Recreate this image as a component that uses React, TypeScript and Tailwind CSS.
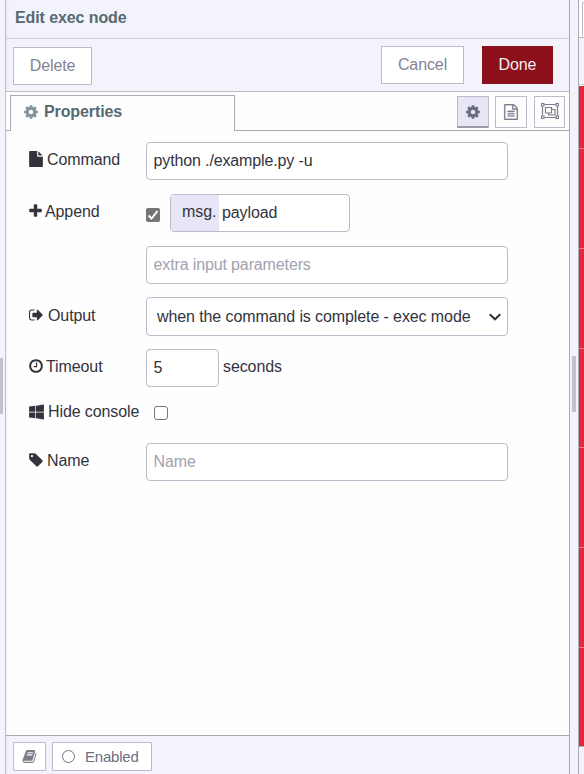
import React from "react";

const COG =
  "M1152 896q0-106-75-181t-181-75-181 75-75 181 75 181 181 75 181-75 75-181zm512-109v222q0 12-8 23t-20 13l-185 28q-19 54-39 91 35 50 107 138 10 12 10 25t-9 23q-27 37-99 108t-94 71q-12 0-26-9l-138-108q-44 23-91 38-16 136-29 186-7 28-36 28h-222q-14 0-24.5-8.5t-11.5-21.5l-28-184q-49-16-90-37l-141 107q-10 9-25 9-14 0-25-11-126-114-165-168-7-10-7-23 0-12 8-23 15-21 51-66.5t54-70.5q-27-50-41-99l-183-27q-13-2-21-12.5t-8-23.5v-222q0-12 8-23t19-13l186-28q14-46 39-92-40-57-107-138-10-12-10-24 0-10 9-23 26-36 98.5-107.5t94.5-71.5q13 0 26 10l138 107q44-23 91-38 16-136 29-186 7-28 36-28h222q14 0 24.5 8.5t11.5 21.5l28 184q49 16 90 37l142-107q9-9 24-9 13 0 25 10 129 119 165 170 7 8 7 22 0 12-8 23-15 21-51 66.5t-54 70.5q26 50 41 98l183 28q13 2 21 12.5t8 23.5z";
const FILE =
  "M1152 512v-472q22 14 36 28l408 408q14 14 28 36h-472zm-128 32q0 40 28 68t68 28h544v1056q0 40-28 68t-68 28h-1344q-40 0-68-28t-28-68v-1600q0-40 28-68t68-28h800v544z";
const FILE_TEXT =
  "M1596 380q28 28 48 76t20 88v1152q0 40-28 68t-68 28h-1344q-40 0-68-28t-28-68v-1600q0-40 28-68t68-28h896q40 0 88 20t76 48zm-444-244v376h376q-10-29-22-41l-313-313q-12-12-41-22zm384 1528v-1024h-416q-40 0-68-28t-28-68v-416h-768v1536h1280zm-1024-864q0-14 9-23t23-9h704q14 0 23 9t9 23v64q0 14-9 23t-23 9h-704q-14 0-23-9t-9-23v-64zm736 224q14 0 23 9t9 23v64q0 14-9 23t-23 9h-704q-14 0-23-9t-9-23v-64q0-14 9-23t23-9h704zm0 256q14 0 23 9t9 23v64q0 14-9 23t-23 9h-704q-14 0-23-9t-9-23v-64q0-14 9-23t23-9h704z";
const PLUS =
  "M1600 736v192q0 40-28 68t-68 28h-416v416q0 40-28 68t-68 28h-192q-40 0-68-28t-28-68v-416h-416q-40 0-68-28t-28-68v-192q0-40 28-68t68-28h416v-416q0-40 28-68t68-28h192q40 0 68 28t28 68v416h416q40 0 68 28t28 68z";
const CLOCK =
  "M1024 544v448q0 14-9 23t-23 9h-320q-14 0-23-9t-9-23v-64q0-14 9-23t23-9h224v-352q0-14 9-23t23-9h64q14 0 23 9t9 23zm416 352q0-148-73-273t-198-198-273-73-273 73-198 198-73 273 73 273 198 198 273 73 273-73 198-198 73-273zm224 0q0 209-103 385.500t-279.500 279.500-385.500 103-385.500-103-279.500-279.500-103-385.500 103-385.500 279.500-279.500 385.500-103 385.500 103 279.500 279.500 103 385.500z";
const WINDOWS =
  "M682 1006v651l-682-94v-557zM682 263v659h-682v-565zM1664 1006v786l-907-125v-661zM1664 128v794h-907v-669z";
const TAG =
  "M576 448q0-53-37.500-90.500t-90.500-37.500-90.500 37.500-37.500 90.500 37.500 90.500 90.500 37.500 90.500-37.500 37.500-90.500zm1067 576q0 53-37 90l-491 492q-39 37-91 37-53 0-90-37l-715-716q-38-37-64.500-101t-26.500-117v-416q0-52 38-90t90-38h416q53 0 117 26.500t102 64.500l715 714q37 39 37 91z";
const SIGN_OUT =
  "M704 1440q0 4 1 20t.5 26.500-3 23.500-10 19.500-20.500 6.500h-320q-119 0-203.500-84.500t-84.500-203.500v-704q0-119 84.500-203.500t203.500-84.500h320q13 0 22.500 9.500t9.500 22.500q0 4 1 20t.5 26.500-3 23.500-10 19.500-20.500 6.500h-320q-66 0-113 47t-47 113v704q0 66 47 113t113 47h312l11.500 1 11.500 3 8 5.500 7 9 2 13.500zm928-544q0 26-19 45l-544 544q-19 19-45 19t-45-19-19-45v-288h-448q-26 0-45-19t-19-45v-384q0-26 19-45t45-19h448v-288q0-26 19-45t45-19 45 19l544 544q19 19 19 45z";
const BOOK =
  "M1703 478q40 57 18 129l-275 906q-19 64-76.500 107.500t-122.500 43.500h-923q-77 0-148.500-53.500t-99.500-131.500q-24-67-2-127 0-4 3-27t4-37q1-8-3-21.500t-3-19.500q2-11 8-21t16.500-23.500 16.500-23.500q23-38 45-91.500t30-91.500q3-10 .5-30t-.5-28q3-11 17-28t17-23q21-36 42-92t25-90q1-9-2.500-32t.5-28q4-13 22-30.500t22-22.500q19-26 42.500-84.500t27.500-96.500q1-8-3-25.500t-2-26.500q2-8 9-18t18-23 17-21q8-12 16.500-30.500t15-35 16-36 19.500-32 26.500-23.500 36-11.500 47.500 5.500l-1 3q38-9 51-9h761q74 0 114 56t18 130l-274 906q-36 119-71.500 153.500t-128.500 34.500h-869q-27 0-38 15-11 16-1 43 24 70 144 70h923q29 0 56-15.500t35-41.500l300-987q7-22 5-57 38 15 59 43zm-1064 2q-4 13 2 22.500t20 9.500h608q13 0 25.500-9.500t16.500-22.500l21-64q4-13-2-22.500t-20-9.500h-608q-13 0-25.500 9.500t-16.500 22.500zm-83 256q-4 13 2 22.500t20 9.500h608q13 0 25.500-9.500t16.500-22.500l21-64q4-13-2-22.500t-20-9.500h-608q-13 0-25.500 9.500t-16.500 22.500z";

type IconProps = { d: string; box?: string; className: string };

function Icon({ d, box = "0 0 1792 1792", className }: IconProps) {
  return (
    <svg viewBox={box} fill="currentColor" className={`shrink-0 ${className}`}>
      <path d={d} />
    </svg>
  );
}

function GroupIcon() {
  return (
    <svg viewBox="0 0 18 16" fill="none" stroke="currentColor" strokeWidth="1.2" className="h-4 w-[18px] shrink-0">
      <path d="M3.500 1.500h11M3.500 14.500h11M1.500 3.500v9M16.500 3.500v9" />
      <path d="M.5.5h2.500v2.500H.5zM15 .5h2.500v2.500H15zM.5 13H3v2.500H.5zM15 13h2.500v2.500H15z" />
      <path d="M4.500 4.500h6v5.500h-6zM10.500 6.500h3.500v5.500H7.500v-2" />
    </svg>
  );
}

function Label({ icon, children, className }: { icon: React.ReactNode; children: React.ReactNode; className: string }) {
  return (
    <div className={`flex h-6 w-[117px] shrink-0 items-center whitespace-nowrap ${className}`}>
      {icon}
      {children}
    </div>
  );
}

const field = "flex h-[38px] items-center rounded-[4px] border border-[#bbbbca] bg-white px-[6.5px] tracking-[-0.13px]";

export default function App() {
  return (
    <div className="flex h-[774px] w-[584px] overflow-hidden bg-[#f3f3fc] font-['Liberation_Sans',Arial,sans-serif] text-base leading-6 tracking-[-0.1px] text-[#33333d]">
      <div className="flex w-[6px] shrink-0 items-start border-r border-[#bbbbca]">
        <div className="mt-[358px] h-14 w-[3px] bg-[#c2c2cc]" />
      </div>

      <main className="flex w-[563px] shrink-0 flex-col shadow-[inset_3px_0_3px_-2px_#e8e8f1]">
        <header className="flex h-[39px] items-start border-b border-[#cfcfdc] pt-[6px] pl-[9px] font-bold text-[#566a71]">
          Edit exec node
        </header>

        <div className="flex h-[53px] items-start border-b border-[#bbbbca] pl-[7px]">
          <button className="mt-2 h-[38px] w-[79px] border border-[#bbbbca] bg-white pb-px text-[#838391]">Delete</button>
          <button className="mt-[7px] ml-[289px] h-[38px] w-[83px] border border-[#bbbbca] bg-white pb-px text-[#838391]">
            Cancel
          </button>
          <button className="mt-[7px] ml-[18px] h-[38px] w-[71px] bg-[#8c101c] pb-px text-[#eeeeee]">Done</button>
        </div>

        <div className="flex h-[39px] bg-[#fefefe]">
          <div className="w-1 border-b border-[#aaaab7]" />
          <div className="mt-[3px] flex w-[225px] items-center border-x border-t border-[#aaaab7] pb-[3px] pl-3 font-bold text-[#566a71]">
            <Icon d={COG} className="mr-[5px] h-4 w-4 text-[#849398]" />
            Properties
          </div>
          <div className="flex flex-1 items-start border-b border-[#aaaab7] pt-1 pl-[222px] text-[#7c7c8c]">
            <div className="flex h-8 w-8 items-center justify-center border border-b-2 border-[#bbbbca] border-b-[#9a9aa9] bg-[#e6e6f7]">
              <Icon d={COG} className="h-4 w-4 text-[#656d83]" />
            </div>
            <div className="ml-[6px] flex h-8 w-8 items-center justify-center border border-[#bbbbca]">
              <Icon d={FILE_TEXT} className="mb-px h-4 w-4 stroke-current [stroke-width:30]" />
            </div>
            <div className="ml-[7px] flex h-8 w-[31px] items-center justify-center border border-[#bbbbca] pb-[2px]">
              <GroupIcon />
            </div>
          </div>
        </div>

        <section className="h-[604px] bg-[#fefefe] pt-[11px] pl-[23px] shadow-[inset_3px_0_3px_-2px_#f0f0f4]">
          <div className="flex h-[38px]">
            <Label className="mt-[6px]" icon={<Icon d={FILE} box="128 0 1536 1792" className="mr-1 mb-[2px] h-4 w-[14px]" />}>
              Command
            </Label>
            <div className={`${field} w-[362px]`}>python ./example.py -u</div>
          </div>

          <div className="mt-[14px] flex h-[38px]">
            <Label className="mt-[6px]" icon={<Icon d={PLUS} box="192 0 1408 1792" className="mr-[3px] mb-[2px] h-4 w-[13px]" />}>
              Append
            </Label>
            <span className="mt-[14px] flex h-[14px] w-[14px] items-center justify-center rounded-[2px] bg-[#757575]">
              <svg viewBox="0 0 14 14" fill="none" stroke="white" strokeWidth="2" className="h-[14px] w-[14px]">
                <path d="M2.500 7.500l3 3L11.500 3" />
              </svg>
            </span>
            <div className="ml-[10px] flex h-[38px] w-[180px] items-center overflow-hidden rounded-[4px] border border-[#bbbbca] bg-white">
              <span className="flex h-full w-[48px] items-center bg-[#e6e6f7] pb-[2px] pl-[11px]">msg.</span>
              <span className="pl-[3px]">payload</span>
            </div>
          </div>

          <div className="mt-[14px] pl-[117px]">
            <div className={`${field} w-[362px] text-[#a2a2b0]`}>extra input parameters</div>
          </div>

          <div className="mt-[13px] flex h-[39px]">
            <Label className="mt-[7px]" icon={<Icon d={SIGN_OUT} box="64 0 1600 1792" className="mr-[5px] mb-[2px] h-4 w-[14px]" />}>
              Output
            </Label>
            <div className="flex h-[39px] w-[362px] items-center rounded-[4px] border border-[#bbbbca] bg-white pl-[10px]">
              when the command is complete - exec mode
              <svg viewBox="0 0 12 8" fill="none" stroke="currentColor" strokeWidth="2" className="ml-auto mr-[6px] h-2 w-3">
                <path d="M.7 1.200L6 6.300l5.300-5.100" />
              </svg>
            </div>
          </div>

          <div className="mt-[13px] flex h-[38px]">
            <Label className="mt-[6px]" icon={<Icon d={CLOCK} box="128 0 1536 1792" className="mr-[3px] mb-[2px] h-4 w-[14px]" />}>
              Timeout
            </Label>
            <div className={`${field} w-[73px]`}>5</div>
            <span className="mt-[6px] ml-1">seconds</span>
          </div>

          <div className="mt-[13px] flex h-6">
            <Label className="" icon={<Icon d={WINDOWS} box="0 64 1664 1792" className="mr-1 h-4 w-[15px]" />}>
              Hide console
            </Label>
            <span className="mt-[6px] ml-2 h-[14px] w-[14px] rounded-[3px] border border-[#767676] bg-white" />
          </div>

          <div className="mt-[19px] flex h-[38px]">
            <Label className="mt-[6px]" icon={<Icon d={TAG} box="128 0 1536 1792" className="mr-1 mb-[2px] h-4 w-[14px]" />}>
              Name
            </Label>
            <div className={`${field} w-[362px] text-[#a2a2b0]`}>Name</div>
          </div>
        </section>

        <footer className="flex h-[39px] border-t border-[#aaaab7] pt-[6px] pl-[7px] text-[15px] text-[#6c7083]">
          <button className="flex h-[29px] w-[33px] items-center justify-center rounded-[1px] border border-[#bbbbca] bg-white text-[#7c7c8c]">
            <Icon d={BOOK} className="h-[15px] w-[15px]" />
          </button>
          <button className="ml-[6px] flex h-[29px] w-[100px] items-center rounded-[1px] border border-[#bbbbca] bg-white pl-[9px] tracking-[-0.2px]">
            <span className="mr-[10px] h-[13px] w-[13px] rounded-full border border-[#6c7083]" />
            Enabled
          </button>
        </footer>
      </main>

      <div className="flex w-[10px] shrink-0 items-start border-x border-[#aaaab7]">
        <div className="mt-[356px] ml-[2px] h-14 w-1 bg-[#c2c2cc]" />
      </div>

      <aside className="flex w-[5px] shrink-0 flex-col">
        <div className="h-[38px] border-b border-[#bbbbca] bg-white pl-[3px]">
          <div className="mt-[2px] h-[35px] border-t border-l border-[#bbbbca]" />
        </div>
        <div className="h-[46px]" />
        <div className="h-[2px] border-t border-[#cfcfdc] bg-white" />
        <div className="flex h-[660px] flex-col bg-[#e12a37]">
          <div className="mt-[62px] h-px bg-[#ee7d85]" />
          <div className="mt-[99px] h-px bg-[#ee7d85]" />
          <div className="mt-[99px] h-px bg-[#ee7d85]" />
          <div className="mt-[98px] h-px bg-[#ee7d85]" />
          <div className="mt-[99px] h-px bg-[#ee7d85]" />
          <div className="mt-[99px] h-px bg-[#ee7d85]" />
        </div>
        <div className="h-px bg-[#aaaab7]" />
      </aside>
    </div>
  );
}
